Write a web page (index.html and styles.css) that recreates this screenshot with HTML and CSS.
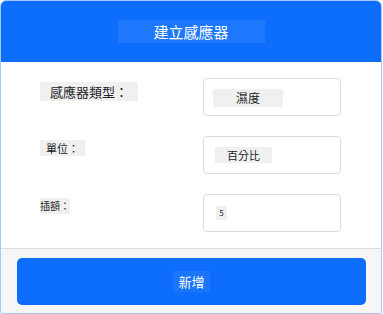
FILE: index.html
```html
<!DOCTYPE html>
<html lang="zh-Hant">
<head>
    <meta charset="UTF-8">
    <meta name="viewport" content="width=device-width, initial-scale=1.0">
    <title>建立感應器</title>
    <link rel="stylesheet" href="styles.css">
</head>
<body>
    <div class="card">
        <div class="card-header">
            <span class="title">建立感應器</span>
        </div>
        <div class="card-body">
            <div class="row">
                <span class="label label-lg">感應器類型：</span>
                <div class="field"><span class="value value-lg">濕度</span></div>
            </div>
            <div class="row">
                <span class="label label-md">單位：</span>
                <div class="field"><span class="value value-md">百分比</span></div>
            </div>
            <div class="row">
                <span class="label label-sm">插額：</span>
                <div class="field"><span class="value value-sm">5</span></div>
            </div>
        </div>
        <div class="card-footer">
            <button class="add-btn"><span>新增</span></button>
        </div>
    </div>
</body>
</html>
```

FILE: styles.css
```css
body {
    font-family: 'Noto Sans CJK TC', 'Noto Sans', sans-serif;
    margin: 0;
    padding: 0;
    background: white;
}
.card {
    width: 380px;
    height: 312px;
    border: 1px solid #a8c8f5;
    border-radius: 6px 6px 2px 2px;
    overflow: hidden;
    display: flex;
    flex-direction: column;
}
.card-header {
    height: 61px;
    background-color: #0d6efd;
    display: flex;
    justify-content: center;
    align-items: center;
}
.title {
    width: 147px;
    height: 23px;
    background: rgba(255, 255, 255, 0.07);
    color: white;
    font-size: 15px;
    line-height: 23px;
    text-align: center;
}
.card-body {
    flex: 1;
    padding: 16px 40px 0 39px;
    display: flex;
    flex-direction: column;
    gap: 20px;
}
.row {
    display: flex;
    justify-content: space-between;
    align-items: flex-start;
}
.label {
    background-color: #f0f0f0;
    color: #222;
    margin-top: 4px;
    text-align: center;
    white-space: nowrap;
}
.label-lg {
    width: 98px;
    height: 19px;
    font-size: 13px;
    line-height: 19px;
}
.label-md {
    width: 45px;
    height: 16px;
    font-size: 11px;
    line-height: 16px;
}
.label-sm {
    width: 30px;
    height: 16px;
    font-size: 10px;
    line-height: 16px;
    text-align: left;
}
.field {
    width: 136px;
    height: 36px;
    border: 1px solid #dcdcdc;
    border-radius: 4px;
    position: relative;
}
.value {
    position: absolute;
    background-color: #f0f0f0;
    color: #222;
    text-align: center;
    border-radius: 1px;
    white-space: nowrap;
}
.value-lg {
    left: 9px;
    top: 10px;
    width: 70px;
    height: 18px;
    font-size: 12px;
    line-height: 18px;
}
.value-md {
    left: 11px;
    top: 10px;
    width: 57px;
    height: 16px;
    font-size: 11px;
    line-height: 16px;
}
.value-sm {
    left: 12px;
    top: 11px;
    width: 11px;
    height: 14px;
    font-size: 8px;
    line-height: 14px;
}
.card-footer {
    height: 65px;
    box-sizing: border-box;
    border-top: 1px solid #dcdcdc;
    background-color: #f6f6f6;
    padding: 9px 15px 0 16px;
}
.add-btn {
    width: 100%;
    height: 47px;
    background-color: #0d6efd;
    border: none;
    border-radius: 5px;
    color: white;
    font-family: inherit;
    font-size: 13px;
    cursor: pointer;
}
.add-btn span {
    display: inline-block;
    padding: 1px 5px;
    background: rgba(255, 255, 255, 0.06);
}
```
